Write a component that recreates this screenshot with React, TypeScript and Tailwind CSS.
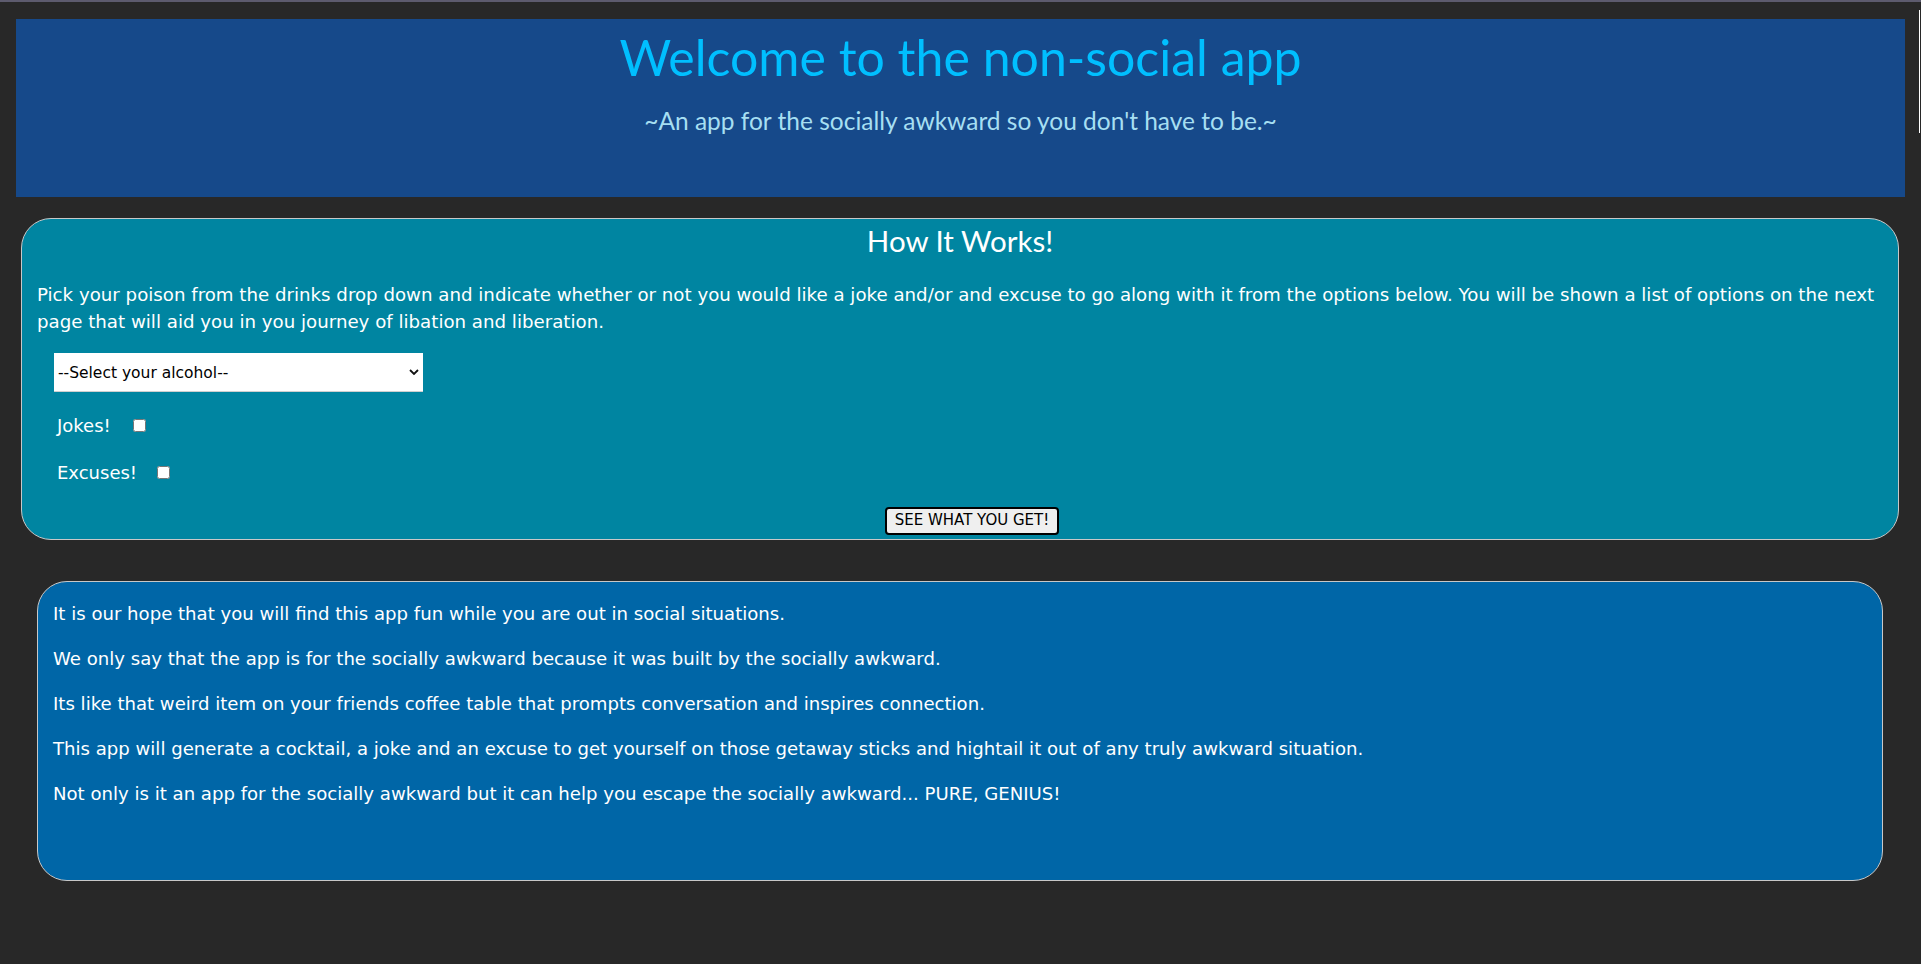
import { useState } from "react";

const paragraphs = [
  "It is our hope that you will find this app fun while you are out in social situations.",
  "We only say that the app is for the socially awkward because it was built by the socially awkward.",
  "Its like that weird item on your friends coffee table that prompts conversation and inspires connection.",
  "This app will generate a cocktail, a joke and an excuse to get yourself on those getaway sticks and hightail it out of any truly awkward situation.",
  "Not only is it an app for the socially awkward but it can help you escape the socially awkward... PURE, GENIUS!",
];

function Chevron() {
  return (
    <svg width="10" height="7" viewBox="0 0 10 7" className="pointer-events-none absolute right-[4px] top-1/2 -translate-y-1/2">
      <path d="M1 1.5 L5 5.5 L9 1.5" fill="none" stroke="#111" strokeWidth="1.8" />
    </svg>
  );
}

export default function App() {
  const [drink, setDrink] = useState("");
  const [jokes, setJokes] = useState(false);
  const [excuses, setExcuses] = useState(false);

  return (
    <div className="relative min-h-screen bg-[#282828] font-['DejaVu_Sans',sans-serif] text-white">
      <div className="h-[2px] bg-[#5d5b6e]" />
      {/* odd little scrollbar sliver on the right edge */}
      <div className="absolute right-[1px] top-[10px] h-[123px] w-px bg-white" />

      <header className="mx-4 mt-[17px] flex h-[178px] flex-col items-center bg-[#16498a] pt-[13px]">
        <h1 className="font-['Comic_Sans_MS','Lato',sans-serif] text-[50px] leading-none text-[#00bfff]">
          Welcome to the non-social app
        </h1>
        <p className="mt-[27px] font-['Lato',sans-serif] text-[24.5px] leading-none text-[#a6dff2]">
          ~An app for the socially awkward so you don't have to be.~
        </p>
      </header>

      <section className="ml-[21px] mr-[22px] mt-[21px] flex h-[322px] flex-col rounded-[30px] border border-[#c8c8c8] bg-[#0085a1] px-[15px] pt-[7px]">
        <h2 className="text-center font-['Lato',sans-serif] text-[29.5px] leading-none">How It Works!</h2>
        <p className="mt-[25px] text-[18.2px] leading-[27px]">
          Pick your poison from the drinks drop down and indicate whether or not you would like a joke and/or and excuse to go
          along with it from the options below. You will be shown a list of options on the next page that will aid you in you
          journey of libation and liberation.
        </p>

        <div className="relative ml-[17px] mt-[18px] w-[369px]">
          <select
            value={drink}
            onChange={(e) => setDrink(e.target.value)}
            className="h-[39px] w-full appearance-none border-0 border-b border-[#cfcfcf] bg-white pl-[4px] pt-[4px] text-[15.5px] text-black outline-none"
          >
            <option value="">--Select your alcohol--</option>
            <option value="vodka">Vodka</option>
            <option value="gin">Gin</option>
            <option value="rum">Rum</option>
            <option value="tequila">Tequila</option>
            <option value="whiskey">Whiskey</option>
          </select>
          <Chevron />
        </div>

        <label className="ml-[20px] mt-[24px] flex h-[20px] items-center gap-[22px] text-[18px]">
          Jokes!
          <input
            type="checkbox"
            checked={jokes}
            onChange={(e) => setJokes(e.target.checked)}
            className="h-[13px] w-[13px]"
          />
        </label>
        <label className="ml-[20px] mt-[27px] flex h-[20px] items-center gap-[20px] text-[18px]">
          Excuses!
          <input
            type="checkbox"
            checked={excuses}
            onChange={(e) => setExcuses(e.target.checked)}
            className="h-[13px] w-[13px]"
          />
        </label>

        <div className="mt-[24px] flex justify-center pl-[24px]">
          <button className="h-[28px] rounded-[4px] border-2 border-black bg-[#efefef] px-[8px] text-[15px] leading-none text-black">
            SEE WHAT YOU GET!
          </button>
        </div>
      </section>

      <section className="ml-[37px] mr-[38px] mt-[41px] flex h-[300px] flex-col gap-[18px] rounded-[30px] border border-[#c8c8c8] bg-[#0066a7] px-[15px] pt-[18px]">
        {paragraphs.map((p) => (
          <p key={p} className="text-[18.1px] leading-[27px]">
            {p}
          </p>
        ))}
      </section>
    </div>
  );
}
